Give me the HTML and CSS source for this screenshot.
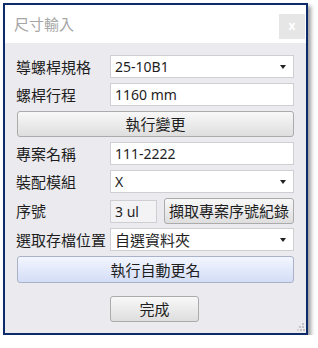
FILE: index.html
```html
<!DOCTYPE html>
<html lang="zh-Hant">
<head>
<meta charset="utf-8">
<link rel="stylesheet" href="styles.css">
</head>
<body>
<div class="window">
  <div class="titlebar">
    <span class="title">尺寸輸入</span>
    <span class="close">x</span>
  </div>
  <div class="content">
    <div class="row">
      <span class="label">導螺桿規格</span>
      <div class="field select">25-10B1<span class="arrow"></span></div>
    </div>
    <div class="row">
      <span class="label">螺桿行程</span>
      <div class="field">1160 mm</div>
    </div>
    <div class="btn wide">執行變更</div>
    <div class="row">
      <span class="label">專案名稱</span>
      <div class="field">111-2222</div>
    </div>
    <div class="row">
      <span class="label">裝配模組</span>
      <div class="field select">X<span class="arrow"></span></div>
    </div>
    <div class="row row-tall">
      <span class="label">序號</span>
      <div class="pair">
        <div class="field small">3 ul</div>
        <div class="btn fetch">擷取專案序號紀錄</div>
      </div>
    </div>
    <div class="row">
      <span class="label">選取存檔位置</span>
      <div class="field select cjk">自選資料夾<span class="arrow"></span></div>
    </div>
    <div class="btn wide blue">執行自動更名</div>
    <div class="footer">
      <div class="btn done">完成</div>
    </div>
  </div>
  <div class="grip">
    <svg width="8" height="8" viewBox="0 0 8 8"><rect x="5" y="0" width="2" height="2" fill="#c4c4c4"/><rect x="2" y="3" width="2" height="2" fill="#c4c4c4"/><rect x="5" y="3" width="2" height="2" fill="#c4c4c4"/><rect x="0" y="6" width="2" height="2" fill="#d0d0d0"/><rect x="3" y="6" width="2" height="2" fill="#c4c4c4"/><rect x="6" y="6" width="2" height="2" fill="#c4c4c4"/></svg>
  </div>
</div>
</body>
</html>
```

FILE: styles.css
```css
* { box-sizing: border-box; }
html, body { margin: 0; padding: 0; background: #ffffff; }
body {
  font-family: "Noto Sans CJK TC", "Noto Sans", sans-serif;
  color: #1e1e1e;
}
.window {
  position: relative;
  margin: 3px 0 0 3px;
  width: 305px;
  border: 2px solid #0d2a6b;
  background: #ebebef;
  box-shadow: 3px 3px 4px rgba(0, 0, 0, 0.38);
}
.titlebar {
  height: 38px;
  background: #ffffff;
  display: flex;
  justify-content: space-between;
  align-items: flex-start;
  padding-left: 9px;
}
.title {
  margin-top: 9px;
  font-size: 15px;
  line-height: 20px;
  color: #a6a6a6;
}
.close {
  margin-top: 9px;
  margin-right: 1px;
  width: 26px;
  height: 25px;
  background: #e6e6e6;
  color: #ffffff;
  font-family: "Noto Sans", sans-serif;
  font-size: 12px;
  font-weight: bold;
  line-height: 24px;
  text-align: center;
}
.content {
  padding: 12px 12px 11px 12px;
  display: flex;
  flex-direction: column;
  gap: 5px;
}
.row {
  display: grid;
  grid-template-columns: 93px 184px;
  align-items: center;
  height: 23px;
}
.row-tall { height: 25px; }
.label {
  font-size: 15px;
  line-height: 20px;
  margin-left: -1px;
  white-space: nowrap;
  color: #1e1e1e;
}
.field {
  position: relative;
  height: 23px;
  background: #ffffff;
  border: 1px solid #cfcfd3;
  padding-left: 4px;
  font-family: "Noto Sans", "Noto Sans CJK TC", sans-serif;
  font-size: 14px;
  line-height: 21px;
  color: #1e1e1e;
}
.field.cjk {
  font-family: "Noto Sans CJK TC", sans-serif;
  font-size: 15px;
}
.arrow {
  position: absolute;
  right: 7px;
  top: 9px;
  width: 0;
  height: 0;
  border-left: 3.5px solid transparent;
  border-right: 3.5px solid transparent;
  border-top: 4px solid #222;
}
.pair {
  display: flex;
  align-items: center;
  gap: 7px;
}
.field.small {
  width: 47px;
  background: #f3f3f5;
  flex: none;
}
.btn {
  height: 26px;
  border: 1px solid #ababab;
  border-radius: 3px;
  background: linear-gradient(#f8f8f8, #dedede);
  font-size: 15px;
  line-height: 24px;
  text-align: center;
  color: #1e1e1e;
  white-space: nowrap;
}
.wide { width: 277px; }
.fetch {
  flex: 1;
  padding: 0;
  letter-spacing: 0;
}
.blue {
  height: 27px;
  line-height: 25px;
  border-color: #a9b2c6;
  background: linear-gradient(#f3f6ff, #d3ddf6);
}
.footer {
  display: flex;
  justify-content: center;
  margin-top: 8px;
  padding-right: 2px;
}
.done { width: 89px; }
.grip {
  position: absolute;
  right: 1px;
  bottom: 2px;
  width: 8px;
  height: 8px;
  line-height: 0;
}
```
